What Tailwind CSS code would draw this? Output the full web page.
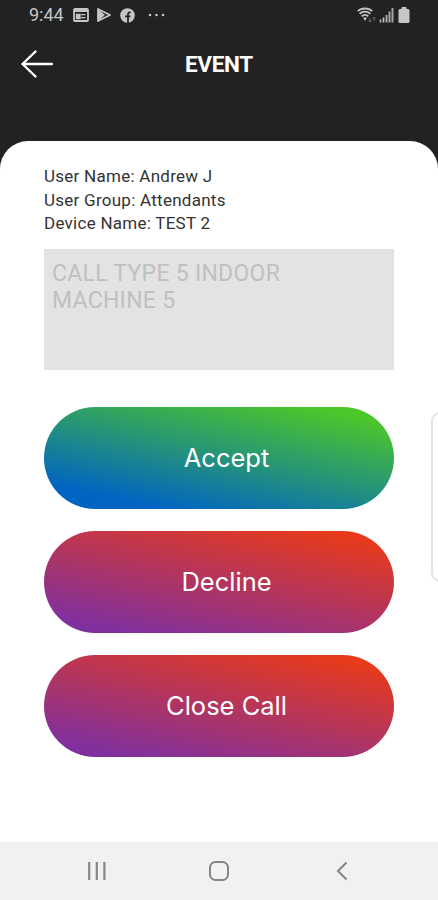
<!DOCTYPE html>
<html lang="en">

<head>
	<meta charset="UTF-8">
	<meta name="viewport" content="width=device-width, initial-scale=1.0">
	<title>Event</title>
	<script src="https://cdn.jsdelivr.net/npm/@tailwindcss/browser@4"></script>
</head>

<body class="bg-[#222224] font-['Roboto',sans-serif]">
	<div class="relative h-[900px] w-[438px] overflow-hidden flex flex-col">

		<!-- Status bar -->
		<div class="h-[30px] flex items-center justify-between pl-[29px] pr-[28px] text-[#c6c6c6]">
			<div class="flex items-center">
				<span class="w-[44px] text-[18px] leading-none">9:44</span>
				<svg class="w-4 h-[14px]" viewBox="0 0 16 14">
					<rect x="1" y="1" width="14" height="12" rx="1" fill="none" stroke="currentColor" stroke-width="1.8" />
					<path d="M1 2.5h14" stroke="currentColor" stroke-width="3" />
					<path d="M3.500 6.500h3.500v4h-3.500zM8 6.700h4.500M8 9.700h4.500" fill="currentColor" stroke="currentColor" stroke-width="1.300" />
				</svg>
				<svg class="ml-2 w-[14px] h-[14px]" viewBox="0 0 14 14">
					<path d="M1 1l12 6-12 6z" fill="none" stroke="currentColor" stroke-width="1.8" stroke-linejoin="round" />
					<path d="M1 1l7 6-7 6z" fill="currentColor" />
				</svg>
				<svg class="ml-[9px] w-[15px] h-[15px]" viewBox="0 0 15 15">
					<circle cx="7.5" cy="7.5" r="7.3" fill="currentColor" />
					<path d="M8 15V6.300c0-1.500.8-2.100 2.700-1.900M5 8.300h5.400" fill="none" stroke="#222224" stroke-width="1.800" />
				</svg>
				<svg class="ml-[13px] w-[17px] h-1" viewBox="0 0 17 4" fill="currentColor">
					<circle cx="2" cy="2" r="1.3" />
					<circle cx="8.5" cy="2" r="1.3" />
					<circle cx="15" cy="2" r="1.3" />
				</svg>
			</div>
			<div class="flex items-center">
				<svg class="w-[20px] h-4" viewBox="0 0 20 16">
					<path d="M.8 4.200C4.500.6 11.500.6 15.200 4.200M2.600 6.800c3-2.800 7.800-2.800 10.800 0M4.700 9.300c1.900-1.800 4.700-1.800 6.600 0" fill="none" stroke="currentColor" stroke-width="1.800" />
					<path d="M6 10.500h4L8 14z" fill="currentColor" />
					<path d="M13 15v-4M11.500 13.500L13 15l1.500-1.500M17 14v-4M15.500 11.500L17 10l1.500 1.500" fill="none" stroke="#666" stroke-width="1" />
				</svg>
				<svg class="ml-[2px] w-[15px] h-4" viewBox="0 0 15 16">
					<path d="M1.500 15.500v-3M4.500 15.500v-5" stroke="currentColor" stroke-width="1.600" />
					<path d="M7.500 15.500V8M10.500 15.500V4.500M13.500 15.500V1" stroke="#a6a6a6" stroke-width="2" />
				</svg>
				<svg class="ml-[4px] w-3 h-4" viewBox="0 0 12 16" fill="currentColor">
					<rect x="3.5" y="0" width="5" height="4" rx="1" />
					<rect x=".5" y="2" width="11" height="14" rx="1.5" />
				</svg>
			</div>
		</div>

		<!-- Header -->
		<header class="h-[111px] flex items-start pt-[20px] pl-[21px] text-white">
			<svg class="w-8 h-7" viewBox="0 0 32 28" fill="none" stroke="currentColor" stroke-width="2.4" stroke-linecap="round" stroke-linejoin="round">
				<path d="M31 14H1.500M14.500 1.500L1.500 14l13 12.500" />
			</svg>
			<h1 class="ml-[132px] text-[22.5px] leading-[28px] font-bold tracking-[-0.3px]">EVENT</h1>
		</header>

		<!-- Event card -->
		<main class="h-[701px] bg-white rounded-t-[28px] px-[44px] pt-[24px]">
			<div class="text-[17px] leading-[23.5px] tracking-[0.26px] text-[#333] whitespace-nowrap">
				<p>User Name: Andrew J</p>
				<p>User Group: Attendants</p>
				<p>Device Name: TEST 2</p>
			</div>

			<div class="mt-[13px] h-[121px] bg-[#e3e3e3] pl-[8px] pt-[11px] text-[23px] leading-[27.5px] tracking-[0.27px] text-[#c0c0c0]">
				<p>CALL TYPE 5 INDOOR</p>
				<p>MACHINE 5</p>
			</div>

			<div class="mt-[37px] flex flex-col gap-[22px] font-['Inter',sans-serif] text-[25.5px] text-white">
				<button class="h-[102px] rounded-full pl-[15px] pt-[2px] bg-linear-[12deg,#0064c3_14%,#4dc62a_90%]">Accept</button>
				<button class="h-[102px] rounded-full pl-[15px] pt-[2px] bg-linear-[12deg,#80309e_10%,#e83a1a_92%]">Decline</button>
				<button class="h-[102px] rounded-full pl-[15px] pt-[2px] bg-linear-[12deg,#80309e_10%,#e83a1a_92%]">Close Call</button>
			</div>
		</main>

		<!-- Navigation bar -->
		<nav class="h-[58px] bg-[#f1f1f1] flex items-center pl-[87px] text-[#858585]">
			<svg class="w-5 h-5" viewBox="0 0 20 20" stroke="currentColor" stroke-width="2.2">
				<path d="M2.200 1v18M9.800 1v18M17.400 1v18" />
			</svg>
			<svg class="ml-[102px] w-5 h-5" viewBox="0 0 20 20" fill="none" stroke="currentColor" stroke-width="2">
				<rect x="1" y="1" width="18" height="18" rx="5.5" />
			</svg>
			<svg class="ml-[107px] w-3 h-5" viewBox="0 0 12 20" fill="none" stroke="currentColor" stroke-width="2">
				<path d="M10.500 1.500L2 10l8.500 8.500" />
			</svg>
		</nav>

		<!-- Edge panel handle -->
		<div class="absolute left-[431px] top-[412px] w-5 h-[170px] rounded-[9px] border-2 border-[#e4e4e4] bg-white"></div>
	</div>
</body>

</html>
